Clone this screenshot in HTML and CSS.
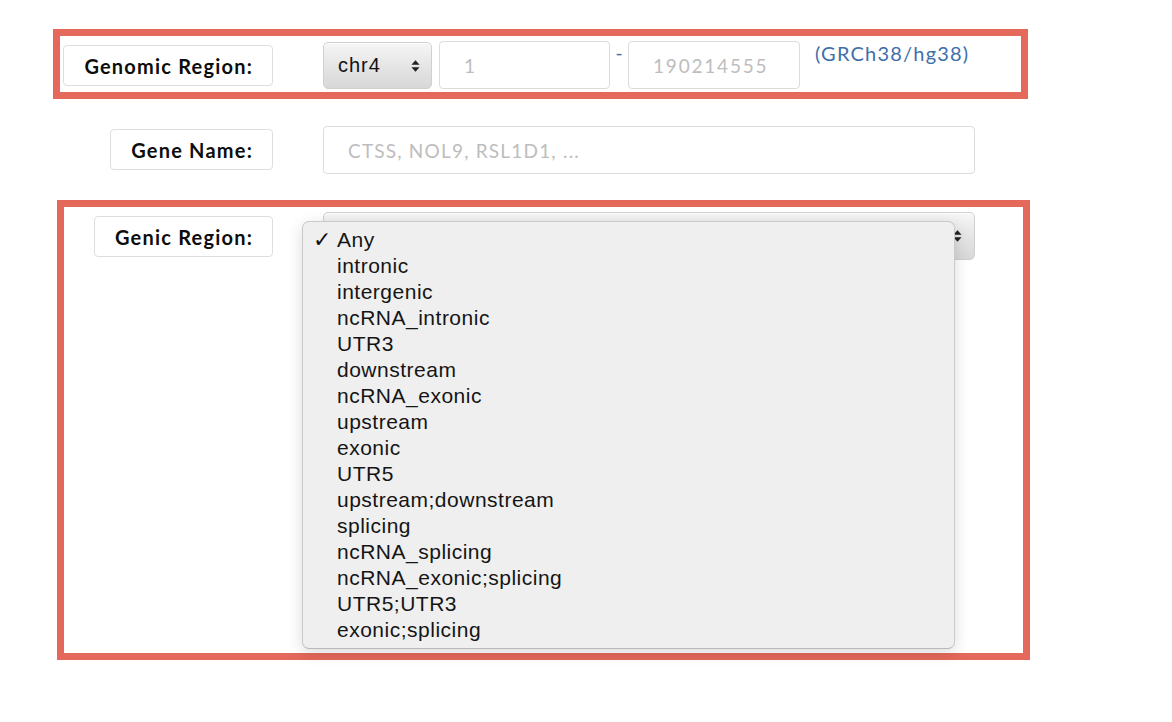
FILE: index.html
```html
<!DOCTYPE html>
<html lang="en">
<head>
<meta charset="utf-8">
<title>Region filters</title>
<link rel="stylesheet" href="styles.css">
</head>
<body>
<div class="page">
  <div class="hl hl-1">
    <div class="row row-genomic">
      <div class="label-col"><span class="lbl">Genomic Region:</span></div>
      <div class="field genomic">
        <div class="sel sel-chr"><span class="sel-text">chr4</span><svg class="arrows" width="10" height="14" viewBox="0 0 10 14"><path d="M5 0.5 L9.5 5.5 H0.5 Z M5 13.5 L9.5 8.5 H0.5 Z" fill="#222"/></svg></div>
        <div class="inp inp-start"><span class="ph">1</span></div>
        <span class="dash">-</span>
        <div class="inp inp-end"><span class="ph">190214555</span></div>
        <span class="build">(GRCh38/hg38)</span>
      </div>
    </div>
  </div>

  <div class="row row-gene">
    <div class="label-col"><span class="lbl">Gene Name:</span></div>
    <div class="field">
      <div class="inp inp-wide"><span class="ph">CTSS, NOL9, RSL1D1, ...</span></div>
    </div>
  </div>

  <div class="hl hl-2">
    <div class="row row-genic">
      <div class="label-col"><span class="lbl">Genic Region:</span></div>
      <div class="field genic">
        <div class="sel sel-wide"><span class="sel-text"></span><svg class="arrows" width="10" height="14" viewBox="0 0 10 14"><path d="M5 0.5 L9.5 5.5 H0.5 Z M5 13.5 L9.5 8.5 H0.5 Z" fill="#222"/></svg></div>
        <ul class="menu">
          <li class="opt"><span class="chk">✓</span><span>Any</span></li>
          <li class="opt"><span class="chk"></span><span>intronic</span></li>
          <li class="opt"><span class="chk"></span><span>intergenic</span></li>
          <li class="opt"><span class="chk"></span><span>ncRNA_intronic</span></li>
          <li class="opt"><span class="chk"></span><span>UTR3</span></li>
          <li class="opt"><span class="chk"></span><span>downstream</span></li>
          <li class="opt"><span class="chk"></span><span>ncRNA_exonic</span></li>
          <li class="opt"><span class="chk"></span><span>upstream</span></li>
          <li class="opt"><span class="chk"></span><span>exonic</span></li>
          <li class="opt"><span class="chk"></span><span>UTR5</span></li>
          <li class="opt"><span class="chk"></span><span>upstream;downstream</span></li>
          <li class="opt"><span class="chk"></span><span>splicing</span></li>
          <li class="opt"><span class="chk"></span><span>ncRNA_splicing</span></li>
          <li class="opt"><span class="chk"></span><span>ncRNA_exonic;splicing</span></li>
          <li class="opt"><span class="chk"></span><span>UTR5;UTR3</span></li>
          <li class="opt"><span class="chk"></span><span>exonic;splicing</span></li>
        </ul>
      </div>
    </div>
  </div>
</div>
</body>
</html>
```

FILE: styles.css
```css
* { box-sizing: border-box; }
html, body { margin: 0; padding: 0; background: #fff; }
body { font-family: "Lato", "Liberation Sans", sans-serif; color: #111; }

.page {
  width: 1172px;
  height: 722px;
  padding-top: 29px;
  overflow: hidden;
}

.hl {
  border: 7px solid #e4695a;
}
.hl-1 {
  margin-left: 53px;
  width: 975px;
  height: 70px;
  padding-top: 5px;
}
.hl-2 {
  margin-left: 57px;
  margin-top: 26px;
  width: 973px;
  height: 460px;
  padding-top: 5px;
}

.row {
  display: grid;
  grid-template-columns: var(--lw) 1fr;
  column-gap: 50px;
  align-items: start;
}
.row-genomic { --lw: 213px; }
.row-gene { --lw: 273px; margin-top: 27px; }
.row-genic { --lw: 209px; }

.label-col {
  display: flex;
  justify-content: flex-end;
}
.lbl {
  display: flex;
  align-items: center;
  height: 41px;
  padding: 0 19px 0 20px;
  border: 1px solid #dedede;
  border-radius: 4px;
  background: #fff;
  font-family: "Lato", sans-serif;
  font-weight: 700;
  font-size: 20px;
  letter-spacing: 1.2px;
  color: #0d0d0d;
  white-space: nowrap;
}
.row-genomic .lbl { margin-top: 4px; }
.row-gene .lbl { margin-top: 3px; }
.row-genic .lbl { margin-top: 4px; }

.field { display: flex; align-items: flex-start; }
.genic { position: relative; }

.inp {
  height: 48px;
  border: 1px solid #dcdcdc;
  border-radius: 4px;
  background: #fff;
  padding-left: 24px;
  display: flex;
  align-items: center;
  font-family: "Lato", sans-serif;
  font-size: 19px;
  letter-spacing: 1.2px;
}
.ph { color: #bdbdbd; white-space: nowrap; }
.inp-start { width: 171px; margin-left: 7px; }
.inp-end { width: 172px; letter-spacing: 1.8px; }
.inp-wide { width: 652px; }

.dash {
  width: 18px;
  text-align: center;
  color: #3f6fa9;
  font-size: 19px;
  line-height: 20px;
  padding-top: 2px;
}
.build {
  margin-left: 15px;
  color: #3f6fa9;
  font-size: 20px;
  letter-spacing: 1.2px;
  line-height: 22px;
  padding-top: 1px;
  white-space: nowrap;
}

.sel {
  height: 47px;
  border: 1px solid #d0d0d0;
  border-radius: 5px;
  background: linear-gradient(#f6f6f6, #e4e4e4 55%, #d8d8d8);
  box-shadow: inset 0 1px 0 #fff;
  display: flex;
  align-items: center;
  justify-content: space-between;
  padding: 0 11px 0 14px;
  font-family: "Liberation Sans", Arial, sans-serif;
  font-size: 20px;
  letter-spacing: 1px;
  color: #111;
}
.sel-chr { width: 109px; margin-top: 1px; }
.sel-wide { width: 652px; height: 48px; padding-right: 12px; }
.arrows { display: block; width: 9px; }

.menu {
  position: absolute;
  left: -21px;
  top: 9px;
  width: 653px;
  height: 428px;
  margin: 0;
  padding: 5px 0 7px 10px;
  list-style: none;
  background: #efefef;
  border: 1px solid #cacaca;
  border-bottom-color: #b9b9b9;
  border-radius: 7px;
  box-shadow: 0 4px 16px rgba(0, 0, 0, 0.14);
  font-family: "Liberation Sans", Arial, sans-serif;
  font-size: 21px;
  letter-spacing: 0.5px;
  color: #151515;
}
.opt {
  display: grid;
  grid-template-columns: 24px 1fr;
  height: 26px;
  line-height: 26px;
  white-space: nowrap;
}
.chk {
  font-family: "DejaVu Sans", sans-serif;
  font-size: 22px;
  letter-spacing: 0;
  color: #111;
}
```
